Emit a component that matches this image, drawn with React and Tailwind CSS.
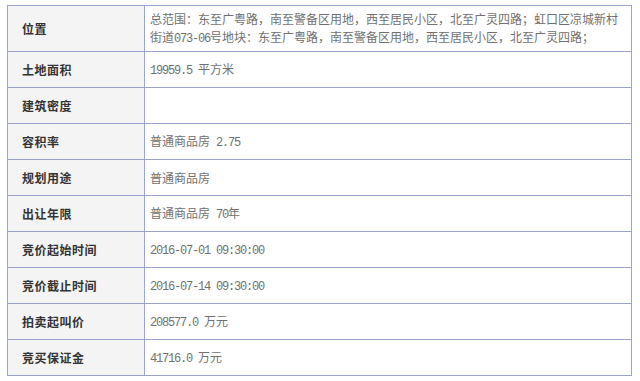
import React from "react";

const rows = [
  {
    label: "位置",
    value:
      "总范围：东至广粤路，南至警备区用地，西至居民小区，北至广灵四路；虹口区凉城新村街道073-06号地块：东至广粤路，南至警备区用地，西至居民小区，北至广灵四路；",
    tall: true,
  },
  { label: "土地面积", value: "19959.5 平方米" },
  { label: "建筑密度", value: "" },
  { label: "容积率", value: "普通商品房 2.75" },
  { label: "规划用途", value: "普通商品房" },
  { label: "出让年限", value: "普通商品房 70年" },
  { label: "竞价起始时间", value: "2016-07-01 09:30:00" },
  { label: "竞价截止时间", value: "2016-07-14 09:30:00" },
  { label: "拍卖起叫价", value: "208577.0 万元" },
  { label: "竞买保证金", value: "41716.0 万元" },
];

// latin runs get a mono face squeezed to the half-width of the CJK glyphs
const Value = ({ text }) => {
  const parts = text.split(/([\x00-\x7F]+)/).filter(Boolean);
  return parts.map((p, i) =>
    /^[\x00-\x7F]+$/.test(p) ? (
      <span key={i} className="font-['Liberation_Mono',monospace] text-[12px] tracking-[-1.2px]">
        {p}
      </span>
    ) : (
      <span key={i}>{p}</span>
    )
  );
};

const App = () => {
  return (
    <div className="w-[640px] h-[381px] bg-white pt-[5px] pl-[7px] font-['Noto_Sans_CJK_SC',sans-serif]">
      <table className="w-[625px] table-fixed border-collapse border border-[#9aa5cf]">
        <colgroup>
          <col className="w-[137px]" />
          <col />
        </colgroup>
        <tbody>
          {rows.map((row) => (
            <tr key={row.label} className={row.tall ? "h-[46px]" : "h-[36px]"}>
              <td className="border border-[#9aa5cf] bg-[#f4f4f4] pl-[14px] text-[12px] font-bold tracking-[0.5px] text-[#333] leading-none">
                {row.label}
              </td>
              <td className="border border-[#9aa5cf] pl-[5px] pr-[10px] text-[12px] leading-[18px] text-[#707070]">
                <Value text={row.value} />
              </td>
            </tr>
          ))}
        </tbody>
      </table>
    </div>
  );
};

export default App;
